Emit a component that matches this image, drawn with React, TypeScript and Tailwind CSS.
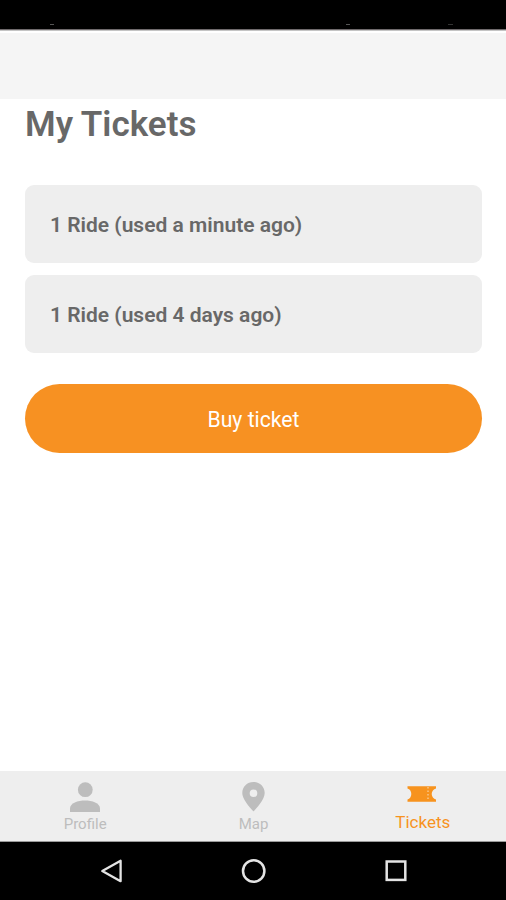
import React, { useState } from 'react';

interface Ticket {
  id: number;
  label: string;
}

const tickets: Ticket[] = [
  { id: 1, label: '1 Ride (used a minute ago)' },
  { id: 2, label: '1 Ride (used 4 days ago)' },
];

const ProfileIcon = () => (
  <svg width="30" height="30" viewBox="0 0 30 30" fill="currentColor">
    <circle cx="15.3" cy="7.7" r="7.4" />
    <path d="M0 30v-3.600C0 21 8 18.400 15 18.400S30 21 30 26.400V30z" />
  </svg>
);

const MapIcon = () => (
  <svg width="23" height="30" viewBox="0 0 23 30" fill="currentColor">
    <path
      fillRule="evenodd"
      d="M11.5 0C5.1 0 .3 4.8.3 11c0 7.5 11.200 18.300 11.200 18.300S22.700 18.500 22.700 11C22.700 4.800 17.900 0 11.500 0zm0 15a3.800 3.800 0 1 1 0-7.600 3.800 3.800 0 0 1 0 7.600z"
    />
  </svg>
);

const TicketIcon = () => (
  <svg width="30" height="16" viewBox="0 0 30 16">
    <path
      fill="currentColor"
      d="M.5.300h28.500v2.200c-2.500.8-4.300 3-4.300 5.500s1.800 4.700 4.300 5.500v2.200H.5v-2.200C3 12.700 4.300 10.500 4.300 8S3 3.300.5 2.500z"
    />
    <path d="M21 1v14" stroke="#f8d3a6" strokeWidth="1.200" strokeDasharray="1.500 2" />
  </svg>
);

const tabs = [
  { name: 'Profile', icon: ProfileIcon },
  { name: 'Map', icon: MapIcon },
  { name: 'Tickets', icon: TicketIcon },
];

const StatusBar = () => (
  <div className="flex h-[30px] shrink-0 items-end border-b border-[#6f6a6c] bg-black pb-[4px] pl-[50px]">
    <span className="h-px w-[4px] bg-[#555555]" />
    <span className="ml-[292px] h-px w-[4px] bg-[#555555]" />
    <span className="ml-[98px] h-px w-[5px] bg-[#333333]" />
  </div>
);

const SystemNav = () => (
  <div className="flex h-[58px] shrink-0 items-center justify-between bg-black pr-[98px] pl-[100px] text-[#e4e4e4]">
    <svg width="24" height="26" viewBox="0 0 24 26" fill="none" stroke="currentColor" strokeWidth="2.300">
      <path d="M20.600 2.800v20.400L2.300 13z" strokeLinejoin="round" />
    </svg>
    <svg width="26" height="26" viewBox="0 0 26 26" fill="none" stroke="currentColor" strokeWidth="2.500">
      <circle cx="12.700" cy="13" r="10.700" />
    </svg>
    <svg width="24" height="24" viewBox="0 0 24 24" fill="none" stroke="currentColor" strokeWidth="2.500">
      <rect x="2.700" y="2.500" width="18.600" height="18.400" />
    </svg>
  </div>
);

export default function App() {
  const [activeTab, setActiveTab] = useState('Tickets');

  return (
    <div className="flex h-[900px] w-[506px] flex-col overflow-hidden bg-white font-['Roboto',sans-serif] text-[#686868]">
      <StatusBar />
      <div className="h-px shrink-0 bg-[#c4c4c4]" />
      <header className="mt-[2px] h-[66px] shrink-0 bg-[#f5f5f5]" />

      <main className="flex-1 pr-[24px] pl-[25px]">
        <h1 className="mt-[4px] text-[35px] leading-[44px] font-semibold">My Tickets</h1>

        <ul className="mt-[38px] space-y-[12px]">
          {tickets.map((ticket) => (
            <li
              key={ticket.id}
              className="flex h-[78px] items-center rounded-[9px] bg-[#eeeeee] pt-[4px] pl-[25px] text-[21px] font-semibold"
            >
              {ticket.label}
            </li>
          ))}
        </ul>

        <button className="mt-[31px] h-[69px] w-full rounded-full bg-[#f79122] pt-[2px] text-[21.200px] text-white">
          Buy ticket
        </button>
      </main>

      <nav className="grid h-[71px] shrink-0 grid-cols-3 border-b border-[#9a9a9a] bg-[#eeeeee] pl-px">
        {tabs.map(({ name, icon: Icon }) => {
          const active = activeTab === name;
          return (
            <button
              key={name}
              onClick={() => setActiveTab(name)}
              className={`flex flex-col items-center ${active ? 'text-[#f7931e]' : 'text-[#bdbdbd]'}`}
            >
              <span className={active ? 'mt-[15px] h-[24px]' : 'mt-[11px] h-[32px]'}>
                <Icon />
              </span>
              <span className={active ? 'pl-[2px] text-[17px] leading-[24px]' : 'text-[15px] leading-[20px]'}>
                {name}
              </span>
            </button>
          );
        })}
      </nav>

      <SystemNav />
    </div>
  );
}
